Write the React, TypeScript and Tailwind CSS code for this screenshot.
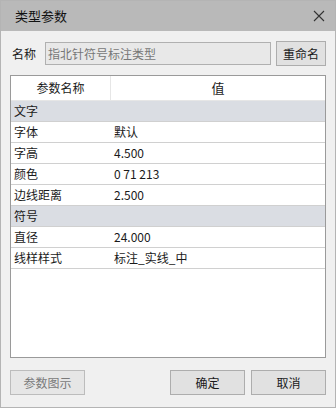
const font = { fontFamily: '"Noto Sans CJK SC", "Noto Sans", sans-serif' };

const rows: { kind: "group" | "item"; name: string; value?: string }[] = [
  { kind: "group", name: "文字" },
  { kind: "item", name: "字体", value: "默认" },
  { kind: "item", name: "字高", value: "4.500" },
  { kind: "item", name: "颜色", value: "0 71 213" },
  { kind: "item", name: "边线距离", value: "2.500" },
  { kind: "group", name: "符号" },
  { kind: "item", name: "直径", value: "24.000" },
  { kind: "item", name: "线样样式", value: "标注_实线_中" },
];

const App = () => {
  return (
    <div
      className="w-[336px] h-[408px] flex flex-col bg-[#f0f0f0] border border-[#b4b4b4] text-[12px] text-[#1a1a1a]"
      style={font}
    >
      <div className="h-[30px] shrink-0 bg-[#b9b9b9] flex items-center justify-between pl-[14px] pr-[10px]">
        <span className="text-[13px] text-[#111]">类型参数</span>
        <svg width="12" height="12" viewBox="0 0 12 12">
          <path d="M1 1L11 11M11 1L1 11" stroke="#333" strokeWidth="1.1" />
        </svg>
      </div>
      <div className="flex items-center pl-[11px] pr-[9px] mt-[10px]">
        <span className="w-[33px]">名称</span>
        <div className="w-[226px] h-[23px] border border-[#b0b0b0] bg-[#e8e8e8] text-[#777] flex items-center pl-[2px]">
          指北针符号标注类型
        </div>
        <button className="ml-[5px] w-[50px] h-[25px] border border-[#adadad] bg-[#e1e1e1] flex items-center justify-center">
          重命名
        </button>
      </div>
      <div className="mx-[9px] mt-[9px] h-[283px] border border-[#9a9a9a] bg-white flex flex-col">
        <div className="flex h-[25px] border-b border-[#e6e6e6]">
          <div className="w-[100px] border-r border-[#e6e6e6] flex items-center justify-center">参数名称</div>
          <div className="flex-1 flex items-center justify-center text-[13px]">值</div>
        </div>
        {rows.map((r) =>
          r.kind === "group" ? (
            <div key={r.name} className="h-[21px] bg-[#dadde3] border-b border-[#d0d0d0] flex items-center pl-[3px]">
              {r.name}
            </div>
          ) : (
            <div key={r.name} className="h-[21px] border-b border-[#d0d0d0] flex items-center">
              <div className="w-[103px] pl-[3px]">{r.name}</div>
              <div>{r.value}</div>
            </div>
          )
        )}
      </div>
      <div className="flex items-center pl-[9px] pr-[9px] mt-[12px]">
        <button className="w-[75px] h-[25px] border border-[#bcbcbc] bg-[#e6e6e6] text-[#7a7a7a] flex items-center justify-center">
          参数图示
        </button>
        <div className="flex-1" />
        <button className="w-[75px] h-[25px] border border-[#adadad] bg-[#e1e1e1] flex items-center justify-center">
          确定
        </button>
        <button className="ml-[6px] w-[75px] h-[25px] border border-[#adadad] bg-[#e1e1e1] flex items-center justify-center">
          取消
        </button>
      </div>
    </div>
  );
};

export default App;
